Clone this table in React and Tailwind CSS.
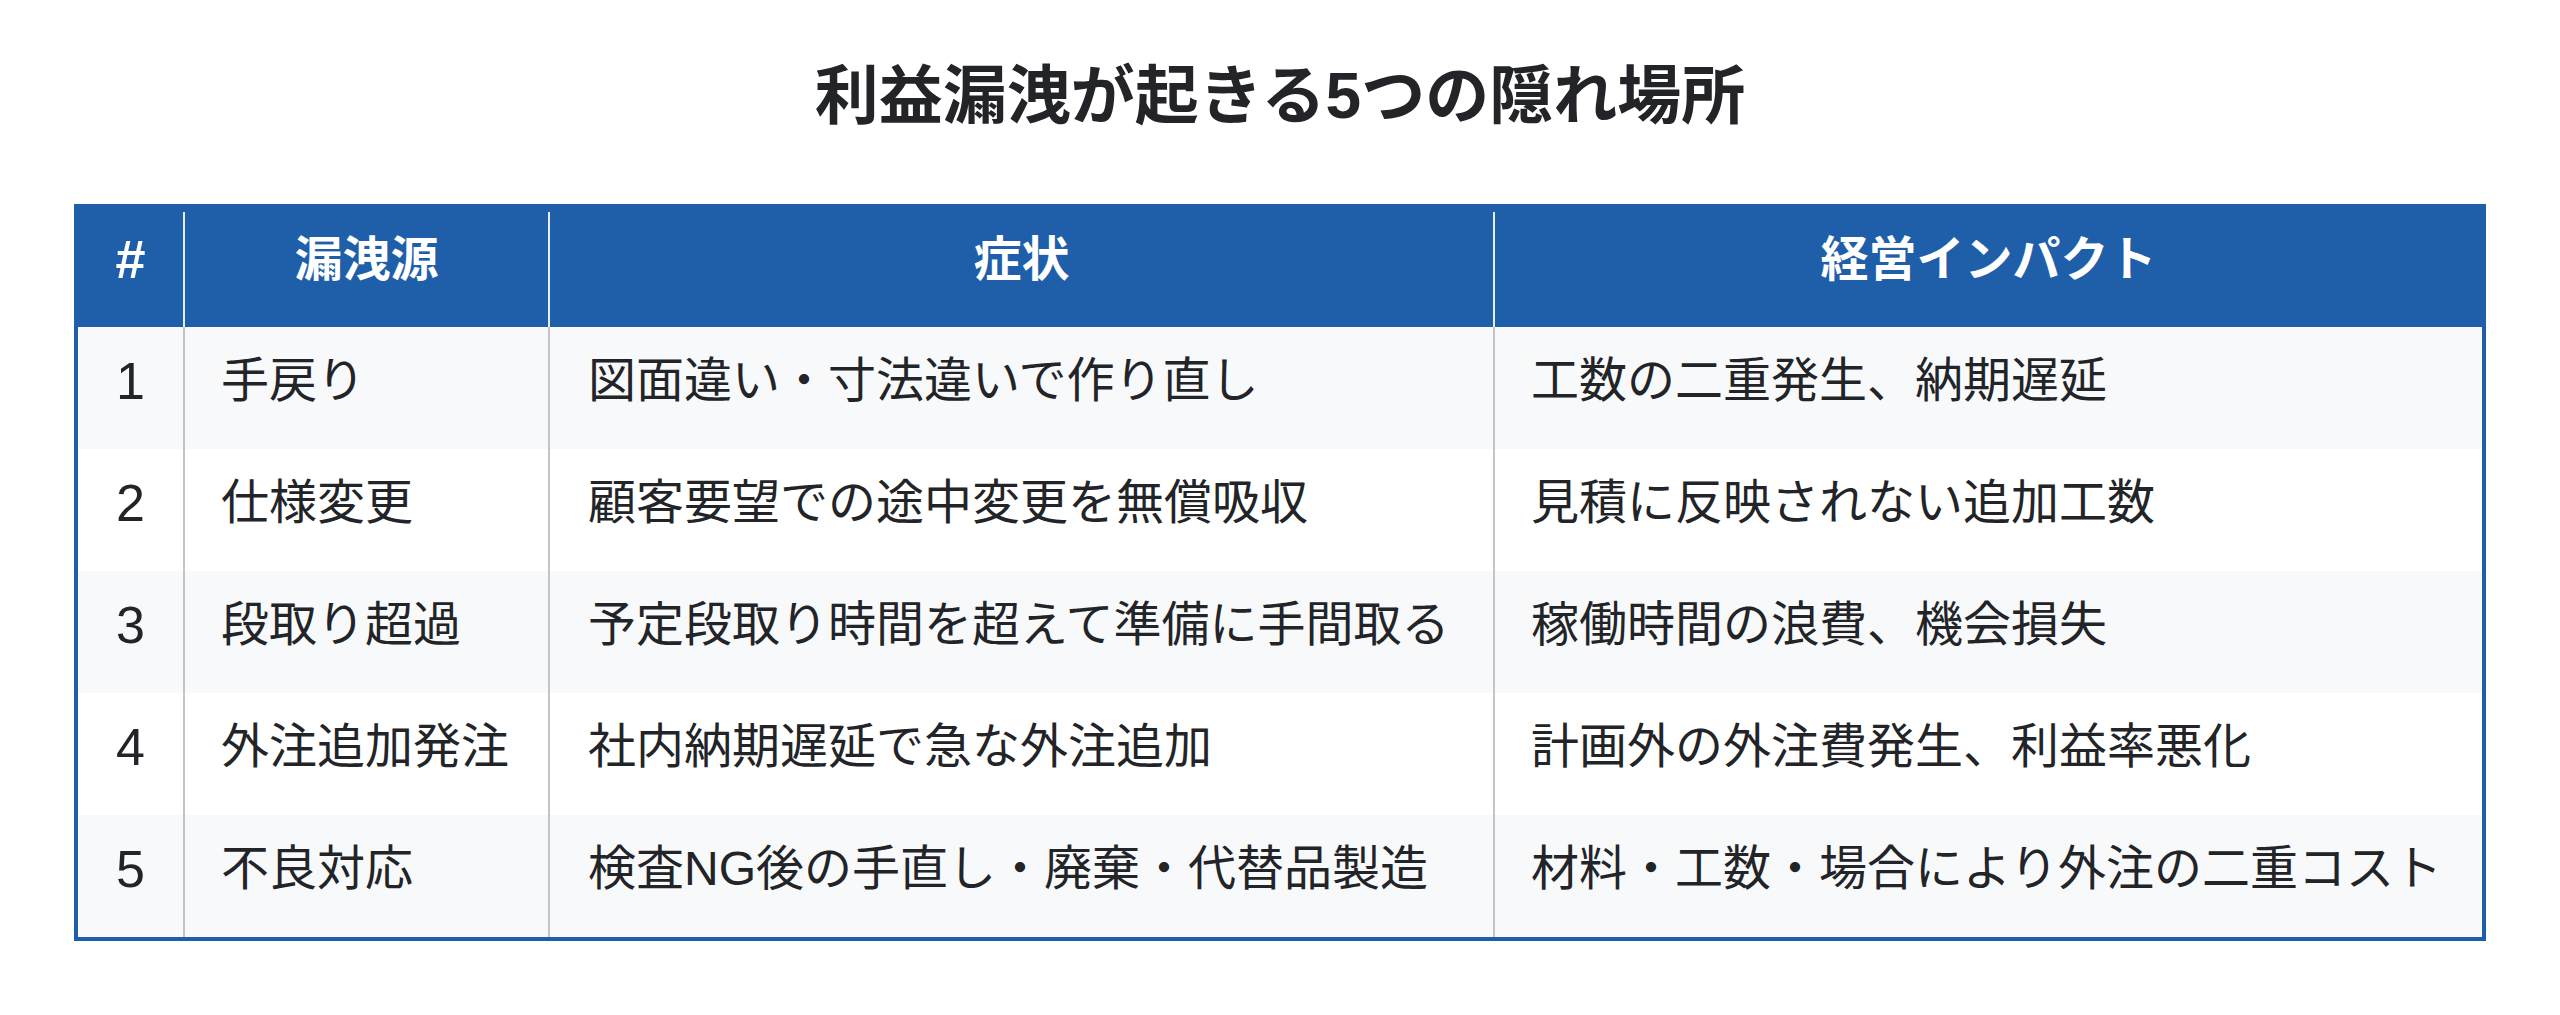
import React from "react";

const rows = [
  ["1", "手戻り", "図面違い・寸法違いで作り直し", "工数の二重発生、納期遅延"],
  ["2", "仕様変更", "顧客要望での途中変更を無償吸収", "見積に反映されない追加工数"],
  ["3", "段取り超過", "予定段取り時間を超えて準備に手間取る", "稼働時間の浪費、機会損失"],
  ["4", "外注追加発注", "社内納期遅延で急な外注追加", "計画外の外注費発生、利益率悪化"],
  ["5", "不良対応", "検査NG後の手直し・廃棄・代替品製造", "材料・工数・場合により外注の二重コスト"],
];

const font = {
  fontFamily: '"Liberation Sans", "Noto Sans CJK JP", sans-serif',
};

function App() {
  return (
    <div className="min-h-screen bg-white px-[74px] pt-[58px]" style={font}>
      <h1 className="text-center text-[64px] font-bold leading-[77px] text-[#222428]">
        利益漏洩が起きる5つの隠れ場所
      </h1>
      <div className="mt-[69px] w-[2412px] border-x-4 border-b-4 border-[#1f5ea8]">
        {/* head */}
        <div className="grid h-[123px] grid-cols-[109px_365px_945px_993px] -mx-[4px] w-[2412px] bg-[#1f5ea8] text-[48px] font-bold text-white">
          <div className="flex items-center justify-center pl-[4px] pb-[12px] text-[54px]">#</div>
          <div className="flex items-center justify-center border-l-2 border-[#e6edf7] mt-[8px] pb-[20px]">漏洩源</div>
          <div className="flex items-center justify-center border-l-2 border-[#e6edf7] mt-[8px] pb-[20px]">症状</div>
          <div className="flex items-center justify-center border-l-2 border-[#e6edf7] mt-[8px] pb-[20px] pr-[4px]">経営インパクト</div>
        </div>
        {rows.map((row, index) => (
          <div
            key={index}
            className={
              "grid h-[122px] grid-cols-[105px_365px_945px_989px] text-[48px] text-[#222428] " +
              (index % 2 === 0 ? "bg-[#f8f9fb]" : "bg-white")
            }
          >
            <div className="flex items-center justify-center pb-[14px] text-[52px]">{row[0]}</div>
            <div className="flex items-center border-l-2 border-[#c4c4c4] pl-[36px] pb-[14px]">{row[1]}</div>
            <div className="flex items-center border-l-2 border-[#c4c4c4] pl-[38px] pb-[14px]">{row[2]}</div>
            <div className="flex items-center border-l-2 border-[#c4c4c4] pl-[36px] pb-[14px] whitespace-nowrap">{row[3]}</div>
          </div>
        ))}
      </div>
    </div>
  );
}

export default App;
